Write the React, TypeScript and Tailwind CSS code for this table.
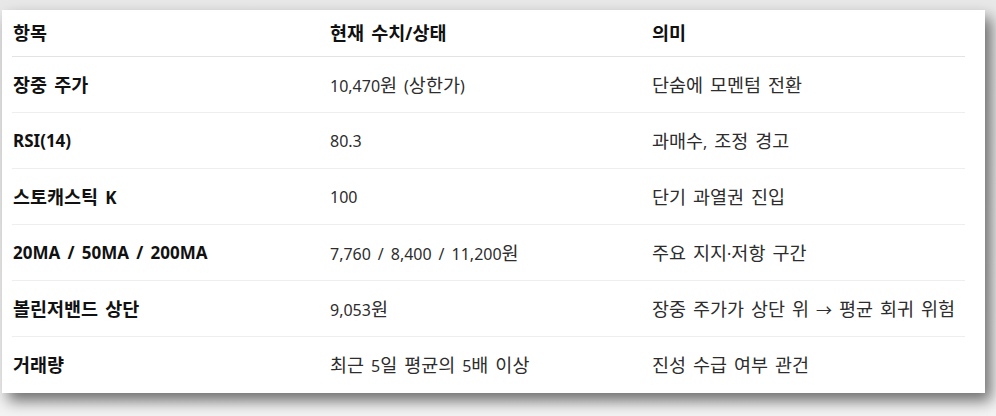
const rows: [string, string, string][] = [
  ["장중 주가", "10,470원 (상한가)", "단숨에 모멘텀 전환"],
  ["RSI(14)", "80.3", "과매수, 조정 경고"],
  ["스토캐스틱 K", "100", "단기 과열권 진입"],
  ["20MA / 50MA / 200MA", "7,760 / 8,400 / 11,200원", "주요 지지·저항 구간"],
  ["볼린저밴드 상단", "9,053원", "장중 주가가 상단 위 → 평균 회귀 위험"],
  ["거래량", "최근 5일 평균의 5배 이상", "진성 수급 여부 관건"],
];

// hangul runs get a slightly larger size so they sit like the original's Korean font
function Ko({ text }: { text: string }) {
  return (
    <>
      {text.split(/([가-힣]+)/).map((part, i) =>
        /[가-힣]/.test(part) ? (
          <span key={i} className="text-[18.5px]">
            {part}
          </span>
        ) : (
          part
        ),
      )}
    </>
  );
}

export default function App() {
  return (
    <div
      className="h-[416px] w-[996px] overflow-hidden bg-gradient-to-b from-[#e8e8e8] to-[#f4f4f4] pl-[2px] pt-[10px]"
      style={{ fontFamily: '"Noto Sans", "Noto Sans CJK KR", sans-serif' }}
    >
      <div className="h-[383px] w-[983px] bg-white pl-[10px] pr-[20px] shadow-[6px_8px_14px_rgba(0,0,0,0.55)] [word-spacing:2.8px]">
        <div className="grid h-[47px] grid-cols-[318px_322px_1fr] items-center border-b border-[#e3e3e3] text-[17px] font-bold text-[#111]">
          <div className="pl-[1px]">
            <Ko text="항목" />
          </div>
          <div>
            <Ko text="현재 수치/상태" />
          </div>
          <div>
            <Ko text="의미" />
          </div>
        </div>
        {rows.map(([label, value, meaning], i) => (
          <div
            key={label}
            className={`grid h-[56px] grid-cols-[318px_322px_1fr] items-center text-[16px] text-[#2d2d2d] ${
              i < rows.length - 1 ? "border-b border-[#eeeeee]" : ""
            }`}
          >
            <div className="pl-[1px] text-[17px] font-bold text-[#111]">
              <Ko text={label} />
            </div>
            <div>
              <Ko text={value} />
            </div>
            <div>
              <Ko text={meaning} />
            </div>
          </div>
        ))}
      </div>
    </div>
  );
}
